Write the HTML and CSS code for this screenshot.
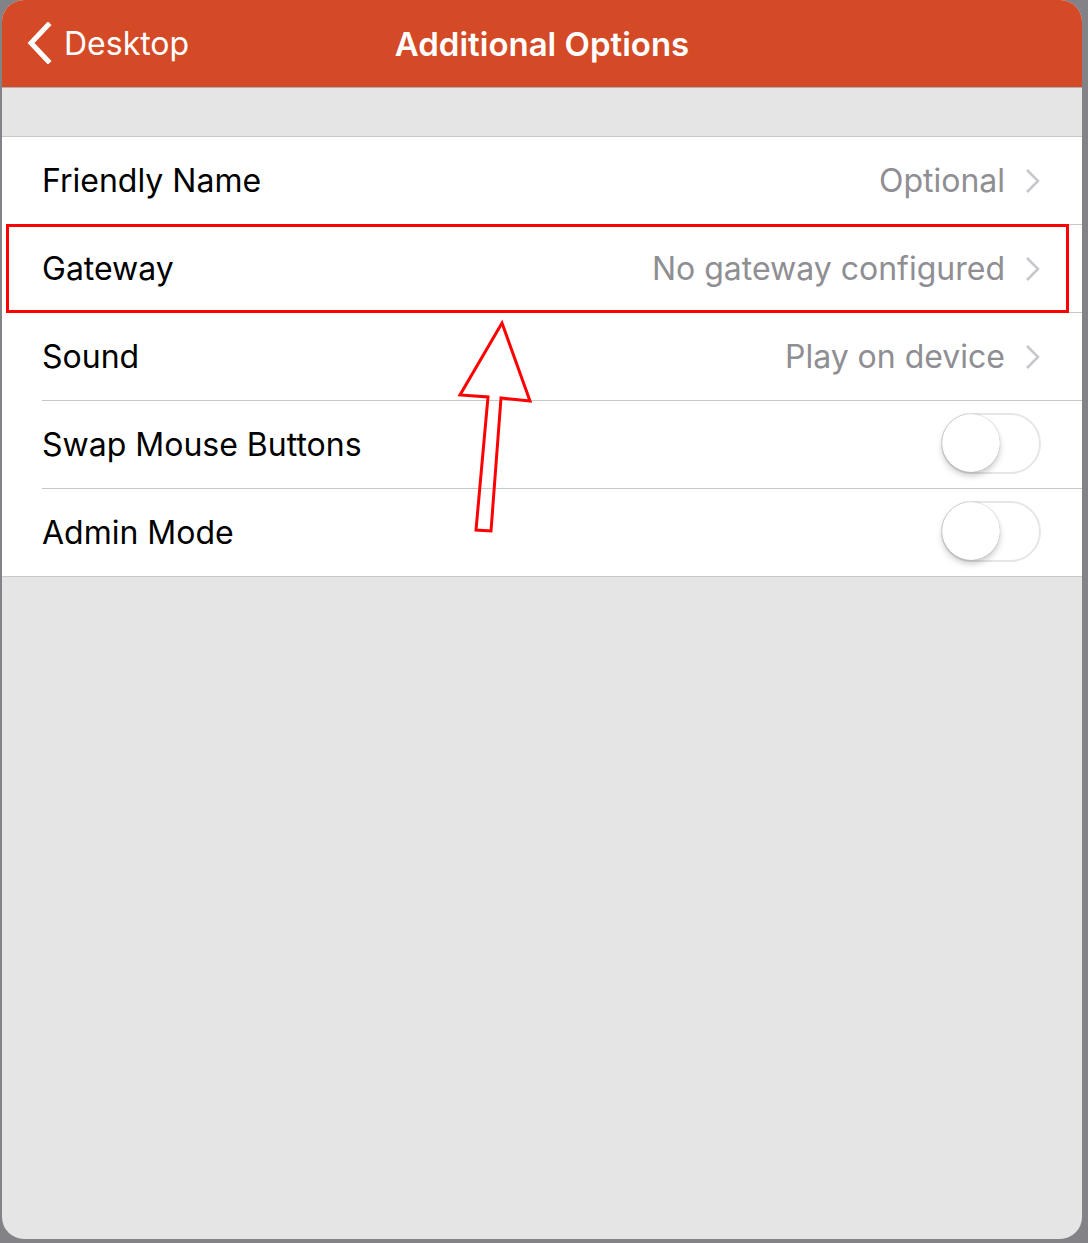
FILE: index.html
```html
<!DOCTYPE html>
<html lang="en">
<head>
    <meta charset="UTF-8">
    <meta name="viewport" content="width=device-width, initial-scale=1.0">
    <title>Additional Options</title>
    <link rel="stylesheet" href="styles.css">
</head>
<body>
    <div class="screen">
        <header class="navbar">
            <div class="back">
                <svg class="back-icon" width="26" height="42" viewBox="0 0 26 42">
                    <polyline points="22,3 5,21 22,39" fill="none" stroke="#fff" stroke-width="5" stroke-linecap="square"/>
                </svg>
                <span>Desktop</span>
            </div>
            <h1 class="title">Additional Options</h1>
            <div></div>
        </header>

        <div class="gap"></div>

        <div class="table">
            <div class="row">
                <div class="row-inner">
                    <span class="label">Friendly Name</span>
                    <span class="value">Optional</span>
                    <svg class="chevron" width="16" height="26" viewBox="0 0 16 26"><polyline points="2,2 13,13 2,24" fill="none" stroke="#c7c7cc" stroke-width="2.6"/></svg>
                </div>
            </div>
            <div class="row">
                <div class="row-inner">
                    <span class="label">Gateway</span>
                    <span class="value">No gateway configured</span>
                    <svg class="chevron" width="16" height="26" viewBox="0 0 16 26"><polyline points="2,2 13,13 2,24" fill="none" stroke="#c7c7cc" stroke-width="2.6"/></svg>
                </div>
            </div>
            <div class="row">
                <div class="row-inner">
                    <span class="label">Sound</span>
                    <span class="value">Play on device</span>
                    <svg class="chevron" width="16" height="26" viewBox="0 0 16 26"><polyline points="2,2 13,13 2,24" fill="none" stroke="#c7c7cc" stroke-width="2.6"/></svg>
                </div>
            </div>
            <div class="row">
                <div class="row-inner">
                    <span class="label">Swap Mouse Buttons</span>
                    <div class="toggle"><div class="knob"></div></div>
                </div>
            </div>
            <div class="row">
                <div class="row-inner last">
                    <span class="label">Admin Mode</span>
                    <div class="toggle"><div class="knob"></div></div>
                </div>
            </div>
        </div>

        <!-- zaznaczenie na zrzucie -->
        <div class="highlight"></div>
    </div>

    <svg class="arrow" width="1088" height="1243" viewBox="0 0 1088 1243">
        <polygon points="502,323 530,401 501,398 491,531 476,530 488,397 460,395" fill="none" stroke="#ff0000" stroke-width="3" stroke-linejoin="miter"/>
    </svg>
</body>
</html>
```

FILE: styles.css
```css
:root {
    --orange: #d44a27;
    --bg: #e5e5e5;
    --line: #c8c7cc;
    --muted: #8e8e93;
}

body {
    margin: 0;
    background: #838387;
    font-family: 'Inter', 'Noto Sans', sans-serif;
    position: relative;
    width: 1088px;
    height: 1243px;
    overflow: hidden;
}

.screen {
    margin-left: 2px;
    width: 1080px;
    height: 1239px;
    border-radius: 22px;
    overflow: hidden;
    background: var(--bg);
    position: relative;
}

.navbar {
    height: 87px;
    background: var(--orange);
    border-bottom: 1px solid #b1b1b1;
    display: grid;
    grid-template-columns: 1fr auto 1fr;
    align-items: center;
    color: white;
}

.back {
    display: flex;
    align-items: center;
    padding-left: 24px;
    font-size: 32px;
    margin-top: -1px;
}

.back-icon {
    margin-right: 12px;
}

.title {
    margin: 0;
    font-size: 33px;
    font-weight: 600;
    letter-spacing: 0;
}

.gap {
    height: 48px;
}

.table {
    background: white;
    border-top: 1px solid var(--line);
    border-bottom: 1px solid var(--line);
}

.row {
    padding-left: 40px;
}

.row-inner {
    height: 87px;
    border-bottom: 1px solid var(--line);
    display: flex;
    align-items: center;
    padding-right: 41px;
    font-size: 32px;
}

.row-inner.last {
    border-bottom: none;
}

.label {
    flex: 1;
    color: #000;
}

.value {
    color: var(--muted);
    margin-right: 20px;
}

.chevron {
    display: block;
}

.toggle {
    width: 100px;
    height: 61px;
    border: 2px solid #e6e6e9;
    border-radius: 32px;
    box-sizing: border-box;
    position: relative;
    margin-top: -3px;
}

.knob {
    position: absolute;
    left: -1px;
    top: -1px;
    width: 58px;
    height: 58px;
    border-radius: 50%;
    background: white;
    box-shadow: 0 4px 6px rgba(0, 0, 0, 0.2), 0 0 1px rgba(0, 0, 0, 0.35);
}

.highlight {
    position: absolute;
    left: 4px;
    top: 224px;
    width: 1063px;
    height: 89px;
    border: 3px solid #ff0000;
    box-sizing: border-box;
}

.arrow {
    position: absolute;
    left: 0;
    top: 0;
    pointer-events: none;
}
```
